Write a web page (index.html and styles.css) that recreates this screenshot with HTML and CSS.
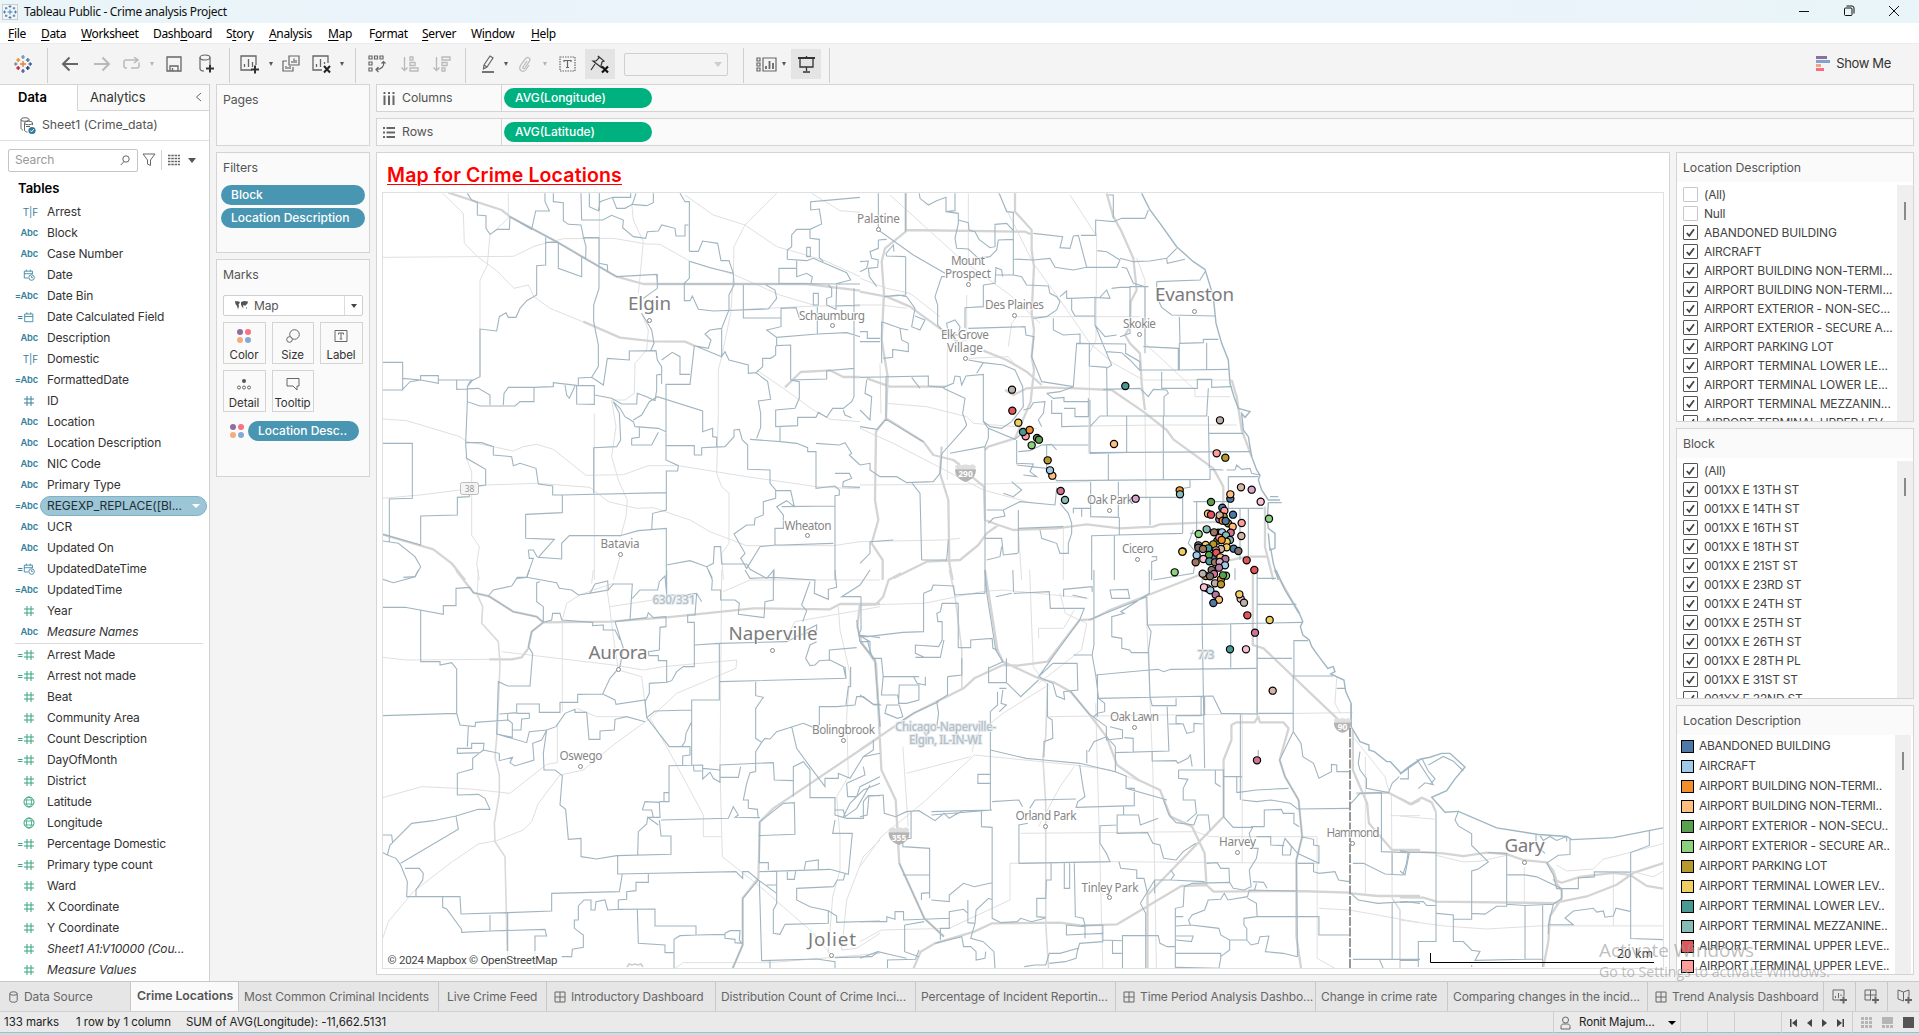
FILE: index.html
```html
<!DOCTYPE html>
<html lang="en">
<head>
<meta charset="utf-8">
<title>Tableau Public - Crime analysis Project</title>
<link rel="stylesheet" href="styles.css">
</head>
<body>
<svg class="defs" width="0" height="0" aria-hidden="true">
  <symbol id="hash" viewBox="0 0 12 12"><path d="M4 1v10M8 1v10M1 4h10M1 8h10"/></symbol>
  <symbol id="cal" viewBox="0 0 14 14"><path d="M2 3.5h9.5v9H2zM2 6.5h9.5M4.5 1.5v2M9 1.5v2"/></symbol>
  <symbol id="caltime" viewBox="0 0 14 14"><path d="M6 10.5H1.5v-8H11V6M1.5 5.5H11M4 .7v2M8.500 .7v2"/><circle cx="10" cy="10" r="3.2"/><path d="M10 8.300V10h1.500"/></symbol>
  <symbol id="globe" viewBox="0 0 12 12"><circle cx="6" cy="6" r="5"/><ellipse cx="6" cy="6" rx="2.500" ry="5" stroke-width=".8"/><path d="M1.500 4h9M1.500 8h9" stroke-width=".8"/></symbol>
  <symbol id="check" viewBox="0 0 15 15"><path d="M3.800 8l2.500 2.800L11 4.300"/></symbol>
  <symbol id="grid" viewBox="0 0 12 12"><path d="M1 1h10v10H1zM1 6h10M6 1v10"/></symbol>
  <symbol id="shield" viewBox="0 0 22 18"><path d="M1 3l3-2 3 1 4-1 4 1 3-1 3 2-1 3H2z" fill="#dedede" stroke="none"/><path d="M1 6h20c0 6-3 10-10 12C4 16 1 12 1 6z" fill="#b4b4b4" stroke="none"/></symbol>
  <symbol id="dots4" viewBox="0 0 14 14"><circle cx="3" cy="3" r="3" fill="#8c6f9c"/><circle cx="11" cy="3" r="3" fill="#fa7183"/><circle cx="3" cy="11" r="3" fill="#f6ab7c"/><circle cx="11" cy="11" r="3" fill="#87a9d1"/></symbol>
</svg>

<header class="titlebar">
  <span class="appicon"><svg width="14" height="14" viewBox="0 0 14 14"><path d="M7 4.500v5M4.500 7h5M7 0v3M5.500 1.500h3M7 11v3M5.500 12.500h3M0 7h3M1.500 5.500v3M11 7h3M12.500 5.500v3M3 2v2.500M2 3.200h2.500M11 2v2.500M9.700 3.200h2.500M3 9.500V12M2 10.800h2.500M11 9.500V12M9.700 10.800h2.500" stroke="#3f83b8"/></svg></span>
  <span class="apptitle">Tableau Public - Crime analysis Project</span>
  <span class="winbtns">
    <svg viewBox="0 0 12 12"><path d="M1 6.500h10"/></svg>
    <svg viewBox="0 0 12 12"><rect x="1.500" y="3" width="7.500" height="7.500" rx="1"/><path d="M3.500 1h5.500a2 2 0 0 1 2 2v5.500"/></svg>
    <svg viewBox="0 0 12 12"><path d="M1 1l10 10M11 1L1 11"/></svg>
  </span>
</header>
<nav class="menubar">
  <span class="m1"><u>F</u>ile</span><span class="m2"><u>D</u>ata</span><span class="m3"><u>W</u>orksheet</span><span class="m4">Dash<u>b</u>oard</span><span class="m5">S<u>t</u>ory</span><span class="m6"><u>A</u>nalysis</span><span class="m7"><u>M</u>ap</span><span class="m8">F<u>o</u>rmat</span><span class="m9"><u>S</u>erver</span><span class="m10">Wi<u>n</u>dow</span><span class="m11"><u>H</u>elp</span>
</nav>

<div class="toolbar">
  <div class="tg g1"><span class="w46"><svg width="18" height="18" viewBox="0 0 18 18" stroke-width="1.400"><path d="M9 6v6M6 9h6" stroke="#eb7a3a"/><path d="M9 0v4M7.300 2h3.400" stroke="#6a93b8"/><path d="M9 14v4M7.300 16h3.400" stroke="#4c5f9b"/><path d="M0 9h3.500M1.700 7.300v3.400" stroke="#7199a6"/><path d="M14.500 9H18M16.300 7.300v3.400" stroke="#4d5e98"/><path d="M4.200 3v4M2.300 5h3.800" stroke="#eb9130"/><path d="M13.800 3v4M11.900 5h3.800" stroke="#4f7b93"/><path d="M4.200 11v4M2.300 13h3.800" stroke="#c7203f"/><path d="M13.800 11v4M11.900 13h3.800" stroke="#1f457e"/></svg></span></div>
  <div class="tg g2">
    <span class="w32"><svg width="18" height="16" viewBox="0 0 18 16" stroke-width="2"><path d="M17 8H2M8.500 1.500L2 8l6.500 6.500"/></svg></span>
    <span class="w32 off"><svg width="18" height="16" viewBox="0 0 18 16" stroke-width="2"><path d="M1 8h15M9.500 1.500L16 8l-6.500 6.500"/></svg></span>
    <span class="w28 off"><svg width="19" height="14" viewBox="0 0 19 14" stroke-width="1.500"><path d="M4 11H3a2 2 0 0 1-2-2V5a2 2 0 0 1 2-2h11M11 0l4 3-4 3M16 5.500V9a2 2 0 0 1-2 2H8"/></svg></span>
    <span class="w12 car off"></span>
    <span class="w32"><svg width="16" height="16" viewBox="0 0 16 16" stroke-width="1.300"><path d="M1 1h14v14H1zM4 15v-5h8v5M6.500 12v3"/></svg></span>
    <span class="w32"><svg width="18" height="20" viewBox="0 0 18 20" stroke-width="1.200"><ellipse cx="8" cy="3.500" rx="5" ry="2.500"/><path d="M3 3.500v11c0 1.500 2 2.500 4 2.500M13 3.500V10"/><path d="M9 14.500h8M13 10.500v8" stroke="#333" stroke-width="2"/></svg></span>
  </div>
  <div class="tg g3">
    <span class="w32"><svg width="20" height="19" viewBox="0 0 20 19" stroke-width="1.300"><path d="M12 15H1V1h15v9M4.500 12V9M8.500 12V4M12.500 12V7"/><path d="M11 14.500h8M15 10.500v8" stroke="#333" stroke-width="2"/></svg></span>
    <span class="w9 car"></span>
    <span class="w32"><svg width="18" height="18" viewBox="0 0 18 18" stroke-width="1.200"><path d="M7 1h10v9H7zM10 8V6M12 8V3.500M14 8V5M5 6H1v10h10v-4M4 14v-3M6 14v-2M8 14v-3"/></svg></span>
    <span class="w30"><svg width="20" height="19" viewBox="0 0 20 19" stroke-width="1.300"><path d="M10 15H1V1h15v7M4.500 12V9M8.500 12V4M12.500 9V7"/><path d="M12 11l6 6.500M18 11l-6 6.500" stroke="#222" stroke-width="2"/></svg></span>
    <span class="w10 car"></span>
  </div>
  <div class="tg g4">
    <span class="w32"><svg width="18" height="18" viewBox="0 0 18 18" stroke-width="1.200"><path d="M1 1h3v3H1zM6.500 1h3v3h-3zM12 1h3v3h-3zM1 7h3v3H1zM1 13h3v3H1z"/><path d="M15.500 7c1 4-2 7.500-7 7.500M13.500 8.500l2-2 2 2M10.500 12l-2.500 2.500 2.500 2.500"/></svg></span>
    <span class="w33 off"><svg width="18" height="16" viewBox="0 0 18 16" stroke-width="1.300"><path d="M3.500 1v13M.5 11.500l3 3 3-3M9 1h3v3H9zM9 6.500h5v3H9zM9 12h8v3H9z"/></svg></span>
    <span class="w32 off"><svg width="18" height="16" viewBox="0 0 18 16" stroke-width="1.300"><path d="M3.500 1v13M.5 11.500l3 3 3-3M9 1h8v3H9zM9 6.500h5v3H9zM9 12h3v3H9z"/></svg></span>
  </div>
  <div class="tg g5">
    <span class="w28"><svg width="14" height="18" viewBox="0 0 14 18" stroke-width="1.200"><path d="M3 10l6-9 3 2-6 9-3.500 2zM3 10l3 2"/><path d="M1 17h12" stroke-width="1.800"/></svg></span>
    <span class="w7 car"></span>
    <span class="w32 off"><svg width="14" height="17" viewBox="0 0 14 17" stroke-width="1.200"><path d="M9 5l-4 6c-.7 1.300 1 2.300 1.900 1l4.600-7c1.500-3-2-5-4-2.300L2.500 9.500C0 14 5 17.500 8 13.500l3-4.500"/></svg></span>
    <span class="w8 car off"></span>
    <span class="w36"><svg width="17" height="16" viewBox="0 0 17 16" stroke-width="1.200"><path d="M1 1h15v14H1z" stroke-dasharray="1.500 1"/><path d="M5 6V4.500h7V6M8.500 4.500v7M7 11.500h3"/></svg></span>
    <span class="w30 on"><svg width="20" height="19" viewBox="0 0 20 19" stroke-width="1.200"><path d="M8 1l6 5-2 1-1 4 1 2-9-7h3l3-3zM5 9l-4 6" stroke="#333"/><path d="M12 11.500l6 6M18 11.500l-6 6" stroke="#111" stroke-width="2.200"/></svg></span>
    <span class="combo"><i></i></span>
  </div>
  <div class="tg g6">
    <span class="w28"><svg width="21" height="15" viewBox="0 0 21 15" stroke-width="1.200"><path d="M1 1h3v3H1zM1 6h3v3H1zM1 11h3v3H1zM7 1h13v13H7z"/><path d="M10 12V9M13.500 12V4M17 12V6" stroke-width="1.800"/></svg></span>
    <span class="w7 car"></span>
    <span class="w30 on gap"><svg width="17" height="17" viewBox="0 0 17 17" stroke-width="1.300"><path d="M0 2h17" stroke-width="2"/><path d="M2 2v9h13V2M8.500 11v4M5 16h7M8.500 0v2"/></svg></span>
  </div>
  <div class="showme"><svg width="14" height="15" viewBox="0 0 14 15"><path d="M0 0h11v3H0z" fill="#8c6f9c"/><path d="M0 4h14v3H0z" fill="#7fa3cd"/><path d="M0 8h5v3H0z" fill="#f0a57c"/><path d="M0 12h8v3H0z" fill="#fa6b7e"/></svg>Show Me</div>
</div>

<main class="work">
  <aside class="data">
    <div class="tabs"><b>Data</b><span class="an">Analytics<svg width="7" height="10" viewBox="0 0 7 10"><path d="M6 1L1.500 5 6 9"/></svg></span></div>
    <div class="source"><svg width="16" height="18" viewBox="0 0 16 18"><ellipse cx="5" cy="2.500" rx="4" ry="1.800"/><path d="M1 2.500v8.500c0 1 1 2 2 2M9 2.500V4"/><ellipse cx="8.500" cy="6" rx="4" ry="1.800"/><path d="M4.500 6v7c0 1.500 2 2 3 2M12.500 6v2M6 9.500h4"/><circle cx="12" cy="13.500" r="3.600" fill="#2f7a98" stroke="none"/><path d="M10.300 13.500l1.300 1.400 2.200-2.700" stroke="#fff"/></svg>Sheet1 (Crime_data)</div>
    <div class="search"><span class="box">Search<svg width="10" height="11" viewBox="0 0 10 11"><circle cx="6" cy="4" r="3.200"/><path d="M4 6.500L.8 10"/></svg></span>
      <svg class="fun" width="14" height="14" viewBox="0 0 14 14"><path d="M1 1h12L8.500 7v5.500l-3-1.500V7z"/></svg>
      <svg class="lst" width="12" height="11" viewBox="0 0 12 11"><path d="M0 1h12M0 4h12M0 7h12M0 10h12" stroke-dasharray="2.500 .8" stroke-width="1.400"/></svg><i class="tri"></i></div>
    <h3>Tables</h3>
    <ul class="fields dim">
      <li><i>T|F</i>Arrest</li>
      <li><i><b>Abc</b></i>Block</li>
      <li><i><b>Abc</b></i>Case Number</li>
      <li><i><svg><use href="#caltime"/></svg></i>Date</li>
      <li><i><b>=Abc</b></i>Date Bin</li>
      <li><i><b>=</b><svg><use href="#cal"/></svg></i>Date Calculated Field</li>
      <li><i><b>Abc</b></i>Description</li>
      <li><i>T|F</i>Domestic</li>
      <li><i><b>=Abc</b></i>FormattedDate</li>
      <li><i><svg><use href="#hash"/></svg></i>ID</li>
      <li><i><b>Abc</b></i>Location</li>
      <li><i><b>Abc</b></i>Location Description</li>
      <li><i><b>Abc</b></i>NIC Code</li>
      <li><i><b>Abc</b></i>Primary Type</li>
      <li class="sel"><i><b>=Abc</b></i><span>REGEXP_REPLACE([Bl...</span></li>
      <li><i><b>Abc</b></i>UCR</li>
      <li><i><b>Abc</b></i>Updated On</li>
      <li><i><b>=</b><svg><use href="#caltime"/></svg></i>UpdatedDateTime</li>
      <li><i><b>=Abc</b></i>UpdatedTime</li>
      <li class="g"><i><svg><use href="#hash"/></svg></i>Year</li>
      <li class="it"><i><b>Abc</b></i>Measure Names</li>
    </ul>
    <ul class="fields mea">
      <li><i><b>=</b><svg><use href="#hash"/></svg></i>Arrest Made</li>
      <li><i><b>=</b><svg><use href="#hash"/></svg></i>Arrest not made</li>
      <li><i><svg><use href="#hash"/></svg></i>Beat</li>
      <li><i><svg><use href="#hash"/></svg></i>Community Area</li>
      <li><i><b>=</b><svg><use href="#hash"/></svg></i>Count Description</li>
      <li><i><b>=</b><svg><use href="#hash"/></svg></i>DayOfMonth</li>
      <li><i><svg><use href="#hash"/></svg></i>District</li>
      <li><i><svg><use href="#globe"/></svg></i>Latitude</li>
      <li><i><svg><use href="#globe"/></svg></i>Longitude</li>
      <li><i><b>=</b><svg><use href="#hash"/></svg></i>Percentage Domestic</li>
      <li><i><b>=</b><svg><use href="#hash"/></svg></i>Primary type count</li>
      <li><i><svg><use href="#hash"/></svg></i>Ward</li>
      <li><i><svg><use href="#hash"/></svg></i>X Coordinate</li>
      <li><i><svg><use href="#hash"/></svg></i>Y Coordinate</li>
      <li class="it"><i><svg><use href="#hash"/></svg></i>Sheet1 A1:V10000 (Cou...</li>
      <li class="it"><i><svg><use href="#hash"/></svg></i>Measure Values</li>
    </ul>
  </aside>

  <section class="cards">
    <div class="card pages"><h4>Pages</h4></div>
    <div class="card filters"><h4>Filters</h4><span class="pill">Block</span><span class="pill">Location Description</span></div>
    <div class="card marks"><h4>Marks</h4>
      <div class="msel"><svg width="13" height="9" viewBox="0 0 13 9"><path d="M0 0l4 .5 1 1-1.500 2L4 5 3 8.500 2 5 .5 3zM6 1l3-1 4 .5-.5 2L11 4l-1 1-1-1-1 .5L8.500 7 7 6 6 3.500zM11 6l1 1-1 1z"/></svg><span>Map</span><em></em></div>
      <div class="mgrid">
        <div><svg width="14" height="14"><use href="#dots4"/></svg>Color</div>
        <div><svg width="14" height="14" viewBox="0 0 14 14"><circle cx="8.500" cy="5.500" r="4.800"/><circle cx="3.500" cy="10.500" r="2.800" fill="#fafafa"/></svg>Size</div>
        <div><svg width="14" height="14" viewBox="0 0 14 14"><path d="M1 1.500h12v11H1z"/><path d="M4.500 5.500V4h5v1.500M7 4v6M5.800 10h2.400"/></svg>Label</div>
        <div><svg width="14" height="14" viewBox="0 0 14 14"><circle cx="7" cy="4" r="2" fill="#555" stroke="none"/><circle cx="2" cy="10.500" r="1.500"/><circle cx="7" cy="10.500" r="1.500"/><circle cx="12" cy="10.500" r="1.500"/></svg>Detail</div>
        <div><svg width="14" height="14" viewBox="0 0 14 14"><path d="M1 1.500h12v7.500h-2v4L7 9H1z"/></svg>Tooltip</div>
      </div>
      <div class="mpill"><svg width="14" height="14"><use href="#dots4"/></svg><span class="pill">Location Desc..</span></div>
    </div>
  </section>

  <section class="right">
    <div class="shelf"><span class="sl"><svg width="12" height="13" viewBox="0 0 12 13"><path d="M1.500 0v2M6 0v2M10.500 0v2M1.500 3.500V13M6 3.500V13M10.500 3.500V13"/></svg>Columns</span><span class="gpill">AVG(Longitude)</span></div>
    <div class="shelf"><span class="sl"><svg width="12" height="13" viewBox="0 0 12 13"><path d="M0 2h2M0 6.500h2M0 11h2M3.500 2H13M3.500 6.500H13M3.500 11H13"/></svg>Rows</span><span class="gpill">AVG(Latitude)</span></div>
    <div class="vizrow">
      <div class="viz">
        <h1>Map for Crime Locations</h1>
        <div class="mapbox">
<svg class="map" viewBox="383 193 1280 775" width="1280" height="775">
<!-- minor roads -->
<g class="minor">
<path transform="translate(380 180) scale(.33333)" d="M188 40L250 100 253 190 295 232 350 272 402 325 445 315 462 350 510 385 620 430M8 232L400 229 465 198 550 176 700 175 800 192 840 193 930 244 1060 283 1200 345 1310 378M385 40V115L330 165 322 255 300 300V590M658 40V250M8 717L80 722 240 770 260 785 340 800 400 813 430 800 470 793 520 808 618 886 730 884 805 857 895 857 1100 890 1310 920 1440 927M257 830L275 875V1065L298 1100 290 1150 298 1200M8 955L120 945 240 930 320 915 475 910 630 922 685 965 770 985 820 983 930 1020 990 1055 1100 1097H1360L1440 1085M643 700V1200M755 70L760 120 790 185 780 290 775 340M785 400L805 450 800 510 765 550 763 640 735 660 695 660 708 740 695 830 715 900 742 960 738 1010 722 1070M720 1130L700 1200M915 45L1000 105 1095 135 1190 200 1330 240 1440 290M1190 40L1095 135 1062 200 1060 290 1052 400 1025 530 1015 570V700L1010 880 1025 920 1047 940V1090L1025 1120 1030 1200M1295 40L1380 92 1440 97M1090 388L1310 378H1440M1130 570L1210 625 1300 690 1350 718 1440 725"/>
<path transform="translate(860 180) scale(.33333)" d="M90 45L300 235 450 345 540 430M630 45L705 160M415 40L520 250 600 360 690 490 760 550 850 600H1115M325 40V240M855 490L930 560 1005 630V650H1110M710 160L708 480 688 520V640L685 820M0 915L375 912 690 905M60 550L63 700M690 738L900 735H1130M320 345V480L262 500V900M470 410H840M0 745L100 790 370 930 500 965M855 695L858 960M78 670L200 680 320 710 340 730 530 745M0 1085L250 1080 300 1075M475 1050L485 1200M610 1040V1200M830 235L855 300V490M0 375H65L140 385M0 295L80 325 150 340 240 410M445 500L455 430 470 410M325 535L445 530 470 560"/>
<path transform="translate(380 570) scale(.33333)" d="M8 262L80 270 330 268M365 245L700 285 790 300 850 290 1070 270 1068 295 890 370 810 445 700 525 640 575 610 600 540 615 475 700 455 755 430 780 350 812 295 822 210 880 100 965 25 1055 8 1105M8 683L125 650 270 657 390 670 500 583 532 578V460M560 100L600 75 640 60 700 40M547 425V150L560 100M295 0L292 70M640 0L635 40M680 50L690 120 700 200 715 300 785 320 790 360 800 440M1025 0L1020 600 1027 860 1140 950 1290 1080 1350 1150M1215 210L1245 155 1500 110M1375 110L1380 180 1410 310 1400 440 1405 620 1370 680 1380 800V900L1358 980 1345 1150M810 445L860 530 970 735V800H1025M1500 810L1450 860 1400 990 1385 1140M690 110L820 90M885 1195L910 1178H1170L1500 1150M1030 65L1110 30H1500M590 415L650 440 740 440M1385 1140L1430 1135 1500 1090"/>
<path transform="translate(860 570) scale(.35714 .33333)" d="M0 105L180 100 340 65 400 60 640 85M475 0L485 290 520 340M560 70L575 130 635 160 620 240 500 340M520 350L400 430 320 500 315 545M800 80L820 600 830 1195M530 440L860 435 1380 428M450 790L940 785 980 800H1280V1165L1330 1195M120 530L135 770M320 555L600 585 700 600 800 640M130 610L310 560M600 590L560 650 500 770M660 400L680 1195M0 1115L60 1080 250 1075 420 990V880L700 875 1280 880M1070 430V880M1285 1015L1370 1020 1568 1058M1380 500L1470 620 1480 660M1488 670L1490 985M1415 560V970M0 890L60 800 180 695 320 555M1335 320L1330 400 1345 430M1485 737H1568M500 205V175H570L600 120"/>
<path transform="translate(1400 420) scale(.33333 .39216)" d="M0 1010L105 1018M0 1275L130 1290 260 1298 420 1290H790M373 1140V1230M640 1155V1290M580 1145L610 1120 690 1103 790 1080M470 1135L500 1150 580 1145M690 1150L760 1165 790 1150M108 1110L190 1127 240 1125 320 1110"/>
</g>
<!-- highways -->
<g class="major">
<path transform="translate(380 180) scale(.33333)" d="M205 38L365 90 390 110 530 185 710 290 790 312H1280L1440 332M610 425L720 473 820 484 915 485 945 498M1215 622L1262 576 1350 571 1390 591H1440M8 1063L160 1108 215 1150 255 1200"/>
<path transform="translate(860 180) scale(.33333)" d="M137 40V155L75 205 65 245 72 340 65 480 83 590 78 715 48 755 45 960 55 1020 35 1090 68 1140V1200M140 150L495 155 517 165M465 40V95L515 150V210L522 260 515 400 522 450 515 530 522 570 512 665 480 740 465 775 385 800 375 810M740 40L760 110 785 155 820 235 830 330 812 365 810 440 795 465 810 490 840 520 845 610 855 690M0 335L80 350 150 380 240 445 300 490M370 512L440 540 500 575 545 615M20 595L90 620H255M435 630L460 645 500 625 545 622 650 625 755 630 850 695 920 750 940 778 1060 865 1090 920V1000M78 715L190 785 220 825 280 840 300 855M335 890L372 920 375 1020 415 1035 460 1050 590 1045 680 1033 780 1045 880 1040 900 1033 1090 1025M415 1035L380 1060 355 1095 300 1140 200 1145 100 1195M1115 600L1130 650 1145 750 1175 830M245 800L240 880 265 960 268 1150 278 1200M1215 980V1100L1240 1200M1090 1145L1160 1130H1220"/>
<path transform="translate(380 570) scale(.33333)" d="M228 0L280 68 330 80 400 125 470 140 490 157 690 155 860 142 1120 115 1350 118 1380 102H1500M490 157L455 185 445 235 425 262 395 268H328M1500 500L1180 715 1140 755 1135 925 1088 985V1125L1058 1195M1440 100L1432 170 1445 220 1485 270 1500 470"/>
<path transform="translate(860 570) scale(.35714 .33333)" d="M0 105L45 103 65 80 80 30 115 10M0 210L45 280 60 600 100 690 110 880 180 1045 235 1100M0 540L150 430 290 355 320 325 400 285M400 285L440 287 525 275 615 150 650 148 700 120 950 15M350 0L385 240 400 275 500 325 545 338 590 365 640 430 690 500 720 585 780 630 840 660 870 740 930 770 965 850 970 945 990 965 1225 963 1370 968M1375 970L1450 978H1568M150 1195L170 1145 210 1120 320 1085 370 1060 560 1058 620 1067 720 1063 900 948 970 945M1100 0V225L1130 235 1345 455M805 1195V975L1018 740V570L1040 510V465L1055 457H1105L1115 440 1120 457H1185L1200 475 1175 570 1190 620 1228 690 1238 800 1222 870V1100L1235 1195M1160 0L1230 130M1380 480V600L1420 700 1425 760 1490 840H1568M1390 670L1480 668 1520 690 1545 703 1568 690"/>
<path transform="translate(1400 420) scale(.33333 .39216)" d="M0 965L30 980 65 963 95 975 108 1000M0 1098L130 1105 190 1112 260 1103 320 1107 370 1122 440 1128 460 1150 470 1175 485 1180 540 1165 640 1155 690 1160 740 1188 790 1195M0 1217L70 1218 110 1228 460 1232 560 1215 650 1185 700 1155 790 1130M460 1170L485 1200V1220L450 1265 445 1330 430 1395"/>
</g>
<g class="mid">
<path transform="translate(380 570) scale(.33333)" d="M290 70L308 110 305 160 355 215 360 280 352 480 345 560 358 615V670L343 760 345 815 375 860 383 1195"/>
<path transform="translate(860 570) scale(.35714 .33333)" d="M525 340L520 500 512 560 520 700V1060L528 1195M250 0L265 70 285 240V355M1112 230V440M1490 985L1512 1020V1195"/>
</g>
<!-- place boundaries and lake shore -->
<g class="bound">
<path transform="translate(380 180) scale(.33333)" d="M262 40L275 60 292 68V105L318 107V145L330 163 352 148H388L390 110 455 148 467 93H508L495 65V40M520 40V65L550 68V122L565 133 603 135 610 170 618 200 617 235 605 230V290L535 265V187H497M390 110L530 185 605 230 710 290 830 283 832 312H1440M603 40L605 120H668L695 106 730 120 728 143 760 170 797 175 802 155 835 153 845 135 885 145 888 168H915V135H925M628 40V80L655 92 660 65 697 52 710 85H735L757 73 800 77 820 68V40M757 73L768 40M697 52H752V40M658 40V92M608 173H657V325L641 375V425L655 495V560L635 592 595 594V617M657 250L682 255 683 275 710 290M497 172V255L470 257V345L440 362 420 385 408 412H385L378 398 358 410 350 453 300 447V590L270 605 262 620V665L300 678H405L420 665H462V622L520 620V608L590 616 643 617V673L590 672V617M555 615L560 645 568 655 575 640 585 618M8 547H68V630H8M68 628L90 605 122 600V587H175V600L278 600 262 620M68 595L122 600 175 610V600M230 600V628L295 625 330 645V675M370 675L372 640 385 622H462M262 665L257 790 260 835 317 868V915L275 920M257 787L305 788 340 800V825L395 830 400 857 420 850 468 865 475 912 518 918V945H547V998L437 1003V1075L523 1078 475 1132 545 1137V1090L568 1067H720L775 1052 859 1045V1200M547 945L859 938M8 790H97V955L28 957V1085M122 1095V1008L232 1005V952L268 950V920M8 1063L122 1095M8 1083L55 1090 105 1130 122 1160 105 1190 70 1192M643 645L695 655 725 672 770 672 772 640 800 650 825 662 830 630V585L843 583M700 665L718 700 722 780 710 800 641 803V940M643 617V645M700 665L720 685 735 710 760 725 765 740 835 745 858 755V613H930L943 497M760 720L785 705 808 665 832 650 968 693V755L998 745V770L1010 772V803M635 592L670 615 682 535 748 540V513L828 512 832 540 845 560V612M845 540L877 517 900 530V583H930M755 775L778 772V742M755 775V795H815L835 757M858 797H943V825H965V803L1035 800 1062 770V750L1078 748 1087 780 1103 795V868L1170 870V910L1187 930V955L1150 965V1005L1125 1015 1123 1035H1100L1062 1062 1095 1120 1082 1135 1100 1165 1140 1100 1185 1095M858 755V840L895 857 893 873H859V990L818 1000 815 1050M928 214H955L968 183 1013 190 1023 242H1047L1060 280 1062 315 1047 345V390L1025 445V530L1035 515 1047 540 1105 555V580L1128 578 1163 605 1172 658 1135 663 1142 700V742L1130 775M900 40L915 65H928V214M928 244V295L913 310V362H930L937 348 955 388 1000 393 1165 387 1190 355 1185 330 1158 315M928 244L990 263 1060 280M790 355L832 325V283M785 400L815 450 822 490 812 512M1025 445L990 450 975 462 993 480 985 505 945 497 1025 530M1090 315V414H1203V385L1248 383 1260 420M1203 414V440L1160 450 1190 472 1312 462 1400 458 1440 470M1190 472V497L1232 495V600L1258 605V655L1245 685 1187 690V740L1253 737V712H1308L1315 697 1340 712 1358 685H1390L1415 665 1422 650V325M1110 778L1200 785V740M1200 785L1250 790 1283 803V815H1308V925L1365 918 1378 930V945L1365 947V1200M1308 790L1378 795 1395 788 1415 820 1408 825 1440 855M1232 600L1340 597V572L1422 565M1128 578L1148 560V535H1172L1187 525V497M1365 880H1408L1415 895 1390 905 1388 920 1440 922M1440 52L1332 62 1292 65V90L1318 87 1325 132 1290 148H1250L1235 165V200L1222 210V238L1280 242 1300 235 1400 278 1412 300 1365 312 1197 310V265H1250V242M1290 148V175L1318 178V232L1330 245M1280 202H1291V230H1280ZM1250 265V290L1280 280 1297 290 1293 310M1300 340V375H1315V340ZM1345 315L1355 325V350L1340 355V375L1368 388 1370 315M1187 932H1232L1243 980 1220 962 1190 980 1210 1005V1045H1185V1095H1205L1360 1090M1205 980L1365 978M859 1155L930 1142 980 1160 1000 1150 1003 1100H1022L1025 1152H1100L1110 1168 1160 1195 1182 1170V1200M980 1160L997 1195M445 1110H460L472 1132M445 1110L448 1135H460L440 1192H410M1312 380V462M1368 378L1440 375M1390 690L1395 705 1415 713M1010 803V772"/>
<path transform="translate(860 180) scale(.33333)" d="M55 40V150L160 225 255 280M178 40L180 55 205 75 230 62 258 52V95L285 92V40M258 95L295 100V130L285 175 290 205 325 207 355 235 390 230 410 210 415 180 460 178M295 120L325 128 327 150 345 155 357 178 390 203 405 200V133L440 130 460 152M418 40L440 95 460 97V285L407 285M460 237L520 240 570 235 585 262 640 270 680 262 770 262 780 240 740 215 712 212M520 160L608 170 600 203 630 205 640 168 655 166 680 262M663 166H707V120L760 125 785 115 855 115 865 90M745 45L760 45V115M780 235L820 245 870 243 920 235 950 205M920 235L922 250 975 238M890 305L1020 300 1035 275M890 305V350L905 382 935 405 1065 408M785 262L800 265 820 310 855 320V520M865 320H810V460L780 470M770 465L735 470 705 435V350M630 355L720 352 740 330 750 355 705 352M755 325L780 322H810M460 285L485 290 500 315 565 318 570 340 590 350 600 365 590 390 560 410 520 415M580 415V450L610 465 660 462V490M600 350L620 333V355H635V390L645 408H705M325 445L495 440 498 465 522 470 515 530 545 605 640 620 650 490 797 492V520L840 545V570H955V505L850 500M738 515L785 518 810 540 840 572M738 515L755 555 740 565 742 708M688 490V558L740 562M705 435L738 515M958 410L960 490 1030 488V478H1075M1040 488V568M958 490V570L1105 568M905 575V625H1012V598H1055V622L1115 620M730 628L840 625 865 650 880 628 920 630 925 640 912 650V708M690 740L720 708 1040 708 1045 625M800 708V818L690 820V660M745 820V900M910 708V898M1045 708L1048 865M690 818L1170 815M1048 760H1150M600 902L1050 898V868L1090 870M640 820M665 1010V985H692M692 905V1010L775 1012V905M870 955V1035M968 925V1060M770 1065L968 1060M778 1012V1065L695 1067V1200M763 1067V1200M775 952H965L970 925 990 922V900M1000 965H1105M1010 965V1140M1100 870H1125L1130 855 1145 868 1170 865 1175 880 1200 885M1105 890V985H1210M1165 985V1140M1140 1140V985M1105 890H1195M137 230V345L72 350M137 230L80 228 78 220 100 195 102 215M55 180L80 178M55 180V205L30 215 35 235 55 240 53 262 25 265 28 290 50 320M0 245L25 243 20 265 0 275M72 350L115 345 140 350 165 385 155 440 180 450 195 420 165 408M65 425L120 445 145 450M120 445L125 480 145 490V515L98 508V532L70 535M137 40V155M255 290H245L225 350 233 375V435L260 465M370 315V380L315 383V445M260 430L285 420 300 440 295 465H265ZM405 262L425 270 428 290M370 315L405 310 408 262M0 592L205 588V618L250 622 280 610 285 588 300 590 305 615 318 588 370 583V725M372 725L390 740 425 745 455 725 490 680 488 620 465 570 430 555 370 548 325 540M370 548L350 580M155 592L180 625M250 625L315 655 308 700 320 735 313 745 245 822M270 820L375 800M370 725L385 745 385 775 375 800V1200M385 745L465 778 480 765M490 690L510 685 520 668 555 665 550 700 535 720 545 740M560 640L580 655 612 652V665H685M575 660V700H605V740L685 738M640 620L600 635 560 640M612 685H645V710H685V655M470 780V850L520 852 510 875 530 890 490 885M475 815L510 812 545 795 575 793 590 810M560 795V865L590 902H600M560 795H685M560 865L470 855M0 855L30 850V870L60 890 110 890 140 908 220 905 240 880 245 822M155 908L180 940 185 1140M375 1075L425 1075 430 1125 473 1120M475 990V1120M380 990L430 990 480 965 585 975 590 925 610 940M430 990L435 1008 400 1015 385 1030M455 905L485 930 460 950 430 940M540 1050L545 1075 590 1090 600 1120H625V1090L635 1060V1030L625 1000 600 970M475 1045L610 1040M425 1100L420 1130 380 1140M640 1000V985H665M875 1130H890V1140L875 1145V1200M0 1150L30 1120 30 1085 100 1080M185 1140L260 1140 265 1080M0 690L30 720 35 650 15 640 20 600M0 740L50 748 78 718 190 785M0 485H60M0 455H22V475H60M1000 1050L985 1090 1010 1120 1000 1180 880 1200M1010 1060H990M65 550V425M83 590H78V715M1125 1165V1200"/>
<path transform="translate(380 570) scale(.33333)" d="M8 28L40 38 105 20 115 0M8 112H75L190 133V107H228V55L270 52 280 68 325 78 340 60 395 48 410 25 440 22 530 38 538 55 575 60 595 75 630 70 645 42 683 33 685 60 627 70M685 60L700 42H757L750 150M757 85L780 60H833L838 35 855 18 860 75M440 22L448 0M480 35L470 38V95L490 110V157L515 150 518 130H540L545 150 638 157V167L670 165V180H705L720 210M705 155L730 235 720 290 690 325 668 372 705 390 708 403 795 390 800 440M122 122V275H180V285L215 278 230 297V430L240 465 285 470 287 457 385 450 397 460V502L350 492 355 335 383 348H450L458 250 445 230 455 185 490 157M8 437L230 430M325 78L400 125 470 140 490 157M705 155L800 143 805 128 820 143 858 140V170L840 172 838 240 805 245 807 257H835V272H860V337L808 340V370L797 392M860 337L875 332 890 305 910 290H943V157H923V135H945L950 70M965 95L950 70 915 75H860V0M943 225L1018 220 1220 215 1260 195 1310 180V165L1270 185M1018 220V390H935V420L825 423 800 443 868 530H930V555L908 558V585M935 420V585M935 455L918 490 915 515 905 530M1018 335L1398 325 1390 290 1350 270 1318 272 1305 285 1290 287 1277 265 1290 225 1310 215M668 372L593 373V397H540V427H478V402H410V428L358 432M383 430V450M410 430H448V445L425 447 423 480H397M350 492L440 518 448 485 500 480 528 470 555 430 585 418V427H620L627 508H660V483L703 480 705 448 740 440 795 455M500 480L490 550 492 600 525 600 547 617 540 705 557 718 565 808 603 805V860L650 867 710 857 873 853V798H843L838 750M500 480L485 510 458 520 462 570 405 588 390 578 398 562 358 572V550L310 540 312 520H275V535L232 535V550L300 548 310 540M300 548L278 565V597L232 610V675L295 673 315 685 330 718 295 718 228 738 160 752 95 760 30 825 22 855 48 865 62 885 82 935 80 980 240 980 243 1032 383 1028 515 1023V970L718 965 727 912H713V857M262 530L265 470M228 738L235 778 62 880M8 795H35L38 820M8 847L22 855M75 895H118L130 910 128 930 108 960V980M188 982V1012L200 1017 245 1078V1087L330 1083 495 1078 500 1098H465V1195M330 1035V1083M383 1028V1195M545 1160H575L577 1138 610 1132V1095L583 1075V1050H595V1008L612 990H633V1020H645L648 995 675 990 683 1020 715 1018V990L740 988V965L768 962V937H805V912M715 1018L825 1017V1068H948V1095L900 1097 882 1108V1195M772 1018L775 1120 855 1125V1148H880M950 1095L1035 1093M713 912L1068 905 1088 925V905H1105L1135 930 1190 970M773 855L775 785 800 762 803 742 835 765M787 720L795 695 838 697 840 742 803 742M787 720H815L820 742M838 695H867V587L968 585V627L990 607 1000 625 1020 637V585L1180 578 1183 630 1240 632V590L1270 575 1290 600V683H1365V735L1400 745 1450 745V695L1465 677H1500M852 693V668H867M843 750L1045 745 1060 710 1075 735 1065 742 1140 743M940 585L942 603H965M1022 622H1075L1082 590M968 595L1020 600M1127 605L1110 608 1100 640 1090 690H1105V715L1132 718 1135 745M1127 335V377L1150 382 1127 415V505L1145 517 1127 545V605M1145 517L1155 505 1170 507 1190 485 1270 460 1300 472 1318 465V410H1370L1425 405 1430 380H1450L1480 403H1500M1235 470L1250 535 1290 590 1335 650V625H1375V610L1410 625 1450 560 1480 540V510M1398 325L1395 290M1412 350H1405L1398 405M1412 290V350M1240 680V598M1210 700L1243 698 1245 793 1135 797M1138 755V878H1165V900M1138 905L1350 898 1405 913 1417 790H1358L1365 750M1210 700L1140 755M1273 898L1277 875 1315 870V898M1222 903V928H1243L1247 903M1190 905V1000L1180 1020V1090L1200 1093 1215 1063 1345 1060V1022L1290 1010 1250 990V955L1360 950 1372 930H1390L1395 912M1160 945H1190M1345 1022L1370 1038V1057L1500 1053M1138 930L1145 1172 1310 1167 1365 1175V1195M1170 1172V1195M1365 1163L1475 1160 1495 1145M1035 1090L1050 1082H1080L1078 1110 1085 1120 1065 1118V1108L1035 1105ZM1135 930L1088 985V1125L1058 1195M985 0L997 30 995 60H1022V90H1065L1078 100 1075 133 1152 143 1155 95 1180 90V0M1095 0L1110 25 1180 22 1305 30 1303 70 1345 88V58L1370 52 1365 0M1290 35L1265 105 1280 122 1268 155M1443 80V180L1435 195 1470 215V250M1470 0L1440 45 1385 80H1443M1435 195L1500 203M1348 270V240L1430 233M1430 150L1440 215 1485 270 1500 470M1440 215H1470M1400 640L1403 680H1430L1440 650 1500 620M1390 740L1410 700 1450 660 1500 640M1365 720L1390 720 1395 740 1430 715 1470 645M1450 590L1455 615 1400 640M1450 560L1500 550"/>
<path transform="translate(860 570) scale(.35714 .33333)" d="M178 70V185L120 187 20 200 0 200M178 70L200 60 205 45 262 48 265 75 330 70 350 70M225 125L230 100H275V233M225 125L215 130 218 155H230V210L220 230 155 225V250L180 262M183 320V345L160 340 150 320M155 262H225L235 210M275 233H310V210L370 205 372 235 385 240M20 210L35 265H60L65 320H165M65 320L60 375H105L110 402M0 375L40 405H60M110 345H165V390L130 400 108 400ZM75 405H110L120 440 105 445 70 430ZM245 320L285 315V265M245 320V375L215 395 220 430 215 470M220 395L150 430 120 450M360 290V338H410V265M390 355H410M385 365V405L365 425V720L200 725M400 360L395 400 410 405 390 425M410 338L450 380 500 330M350 0L355 70 380 240 400 275 360 295M430 70L530 65 533 115H628L615 150 500 320M428 0L430 65M380 80L425 70M350 30V70M570 80V58L650 50V65M595 75L635 85M655 0V225L650 255 660 315 810 300M598 255H650M540 280H608L610 360 570 365 573 388 550 378 540 340 500 320 540 280M700 60L750 58 755 85H705ZM810 0V70L730 125 740 130 705 140V200L733 205V235L755 240 760 248H808M803 80L805 165 815 185 808 240 812 380 818 407H885V385M803 80L640 150M805 165L960 163 1240 157M958 0V160L965 595M1038 160V293M660 315L668 385 988 378 1012 430 1115 432M810 300L835 298 850 305 870 298 1110 295M1112 0V430M1112 103H1222M1112 25H1165M1112 265H1210M1213 430V318H1325M1255 212H1215V320M1115 430H1213V485L1235 520 1240 560 1270 580 1285 625 1320 605V583L1335 585V605H1370M668 385L685 400V425L665 430 655 440M665 315V440M590 365L640 430 690 470V510L735 505V480L700 470M690 500L715 530V548L865 543 860 410M740 503L765 505V545M885 437H955V380H965V435H955M885 437V460L905 462 915 490 935 485V460L960 462M865 462H905M818 545V573L885 572 890 580 918 565 925 555 930 590M892 600H1018V740L1045 772H1100M892 600V625L918 628 905 655V690H938L942 730 915 755M850 690L865 735 885 758 935 765 945 735 975 735 980 780M365 540L465 565 515 570 615 580 715 605M715 550V605L745 618V655L860 690M515 562V515L540 505 538 450 525 440V340M615 585L625 655 630 680 610 695 605 712 768 707V655H745M475 715L490 690 605 687M370 695L445 690 455 710M640 545L655 515 690 500M635 540V580M330 613H365V640H330ZM0 740L20 735 25 678 65 675 68 730 100 740 130 725 165 722 210 752 235 730 250 745 265 735 290 722H340V770L370 772V1045L395 1058 440 1055 450 1045 480 1055 518 1045M200 735L370 720M143 722V805L120 808V830L195 835V985M120 915H195M172 990V970L195 968M110 880L180 1045 235 1100M200 990L250 995V975L290 940 320 950 370 938M0 1055H75V1040L98 1048V1025H122V1050L250 1045V1025L290 1018 302 1030V990M302 1030V1058L322 1060 325 1020 360 985 372 990M125 1065V1145L165 1160M125 1065L180 1055M225 1110V1075H250V1045M322 1060L310 1105 345 1115 375 1145 378 1195M210 1120L285 1100 290 1130H310L325 1145V1170L350 1165 352 1145M0 1165L50 1145 90 1155 130 1165M77 1195V1170L155 1168 165 1140M445 880V765L470 760M445 880L700 875 690 850 672 820V767L720 765V735L780 735 785 765 835 745M720 765V790L805 788 820 820 840 825 850 865 885 870 905 845 940 820M738 710V735M535 880V930H522L520 985H495V1040L520 1042M572 880V955H587V880M600 880L603 1040 625 1045 630 1065M725 875L730 895 775 900V925H795L805 970M785 1000L825 930 870 930 880 915 870 900M785 1000L800 1030V1195M825 930V970M870 930L965 935M460 1190L490 1185 520 1185 530 1150 560 1150 610 1135 605 1165 575 1175 530 1180M610 1140L615 1120 680 1115V1090L578 1095V1065L630 1070V1105M620 1067L680 1065V1110L735 1112V1195M735 1112V1097H835L840 1120 860 1130H883M707 1112V1150H733M883 1195V1015L905 1010 908 950 930 940 1035 937 1045 955 1075 960 1095 950 1090 900 1110 865 1115 835H1100L1090 790 1100 772M883 1040H905M885 1068L925 1065 920 1050 930 1035 965 1020 975 990 1010 988 1020 970 1030 990 1085 980 1090 960 1225 963M885 1098H933L928 1115 885 1110M883 1150H1010V1165L1005 1195 885 1192M1010 1160L1035 1140V1110L1010 1095 1005 1075 965 1070 925 1065M1085 985L1110 1000 1112 1040H1285V1095H1370M1112 1040L1075 1045V1065L1083 1075V1110H1035M1083 1110L1095 1125 1115 1120 1120 1100 1145 1098 1135 1145 1185 1150 1225 1160M1228 690L1238 800 1222 870 1225 1160M970 880L1000 878 1010 895H1033L1035 935M1100 935L1130 937 1140 955M1105 960L1110 940M1075 640M1070 690L1110 695 1150 690 1205 700 1225 717 1370 715M1055 668L1110 660 1200 655M1065 430V690M1018 620H1070M1055 668V620M1132 770V720L1180 718 1185 730H1215V760L1230 770M1132 770H1095M1110 800H1150V825L1188 827M1183 855V830L1190 805 1208 830 1205 855ZM1190 805L1225 850 1285 880V828L1270 825V808L1235 800M1225 880H1270V905L1285 910 1330 905 1340 930 1370 935M995 600V640L1010 650M1115 560V540M1213 485L1175 570 1190 620 1228 690M1335 355H1360M1375 400V470M1400 545L1395 580 1400 600 1418 625V655L1480 668 1490 640 1510 620M1375 700L1400 670 1460 668V845L1535 848 1530 880 1520 915 1470 912 1410 880H1380M1490 850V912M1375 970L1395 990 1450 1000 1530 995 1568 1000M1490 1000V1168L1380 1168M1490 1168H1568M1465 1195L1455 1170"/>
<path transform="translate(1400 420) scale(.33333 .39216)" d="M25 885V915H0M50 865L100 930 75 925 55 940M65 862L85 895 105 915 90 930M85 880L130 858 160 870 190 895M108 1000V1330H55V1395M0 1378H55M0 1098L28 1103 15 1160 0 1150M0 1230L70 1228 80 1238H108M175 998L165 1020 175 1035 215 1055V1085L265 1127 235 1145 215 1150V1273H160V1330H190L215 1352 240 1355 225 1378 375 1375V1238L460 1235M110 1258L160 1262V1273M215 1258L255 1260 290 1240 320 1240V1105L265 1103M28 1103L108 1103M322 1160H375L410 1165 485 1195V1220L460 1235M320 1235L375 1238M428 1238V1375H375M428 1375V1395M215 1390V1395M408 1057V1085L435 1105M510 1068V1108L475 1110 440 1130 460 1160 470 1195H535V1168L583 1165V1152L690 1153M420 1060L430 1072 450 1062 470 1072 500 1062V1075M748 1047V1085L692 1103V1322L790 1325M445 1287L520 1287 495 1270 520 1252 580 1245 590 1255 610 1252 615 1268 640 1265 648 1245 690 1253M460 1235L445 1287 445 1310"/>
</g>
<g class="coast">
<path transform="translate(860 180) scale(.33333)" d="M845 40L870 90 900 130 950 200 1000 245 1035 268 1060 350 1068 430 1085 490 1105 540 1110 610 1122 650 1135 685 1170 695 1155 712 1145 700 1150 750 1165 770 1175 830 1190 870 1200 885 1195 900 1205 930 1225 960H1260M1225 968H1265M1230 950H1255M1225 968L1222 1020 1225 1045 1245 1060V1105L1230 1110 1225 1060M1232 1105L1240 1150 1255 1200"/>
<path transform="translate(860 570) scale(.35714 .33333)" d="M1165 0L1190 60 1230 130 1240 155 1233 170 1240 195 1258 210 1265 230 1285 260 1310 295 1325 290 1330 305 1318 312 1355 330 1360 365 1375 400V470L1400 515 1425 525 1425 540 1440 545 1475 575 1485 575 1515 610 1568 570"/>
<path transform="translate(1400 420) scale(.33333 .39216)" d="M0 903L25 885 60 865 90 860 125 850H150L195 885 165 915 140 945 95 962 135 1000 175 998 290 1040 415 1057 500 1062 515 1070 640 1065 790 1040"/>
</g>
<path class="state" d="M1350 728V968"/>
<!-- route shields -->
<use href="#shield" x="954" y="463" width="23" height="19"/><use href="#shield" x="887.500" y="826" width="23" height="19"/><use href="#shield" x="1333" y="716" width="19" height="18"/>
<rect x="460.500" y="482.500" width="18" height="12" rx="2" fill="#f4f4f4" stroke="#bbb"/>
<path d="M627 967l2-3 3 1 3-1 3 1 3-1 2 3" fill="none" stroke="#ccc" stroke-width="1.500"/>
<g class="rt"><text x="965.500" y="477">290</text><text x="899" y="840.500">355</text><text x="1342.500" y="729.500">90</text></g>
<text class="r38" x="469.500" y="491.500">38</text>
<!-- region names -->
<g class="region"><text x="674" y="604" textLength="43">630/331</text><text x="1206" y="659" textLength="17">773</text><text x="945.500" y="730.500" textLength="101">Chicago-Naperville-</text><text x="945.500" y="744" textLength="73">Elgin, IL-IN-WI</text></g>
<!-- towns -->
<g class="town"><text x="878.500" y="223" textLength="43">Palatine</text><text x="832" y="319.500" textLength="66">Schaumburg</text><text x="620" y="548" textLength="39">Batavia</text><text x="808" y="529.500" textLength="47">Wheaton</text><text x="968" y="264.500" textLength="34">Mount</text><text x="968" y="278" textLength="46">Prospect</text><text x="1014.500" y="309" textLength="59">Des Plaines</text><text x="965" y="338.500" textLength="48">Elk Grove</text><text x="965" y="352" textLength="36">Village</text><text x="1139.500" y="328" textLength="33">Skokie</text><text x="1110" y="504" textLength="46">Oak Park</text><text x="1138" y="553" textLength="32">Cicero</text><text x="581" y="760" textLength="43">Oswego</text><text x="843.500" y="733.500" textLength="63">Bolingbrook</text><text x="1134.500" y="720.500" textLength="49">Oak Lawn</text><text x="1046" y="820" textLength="61">Orland Park</text><text x="1110" y="891.500" textLength="57">Tinley Park</text><text x="1237.500" y="846" textLength="37">Harvey</text><text x="1353" y="837" textLength="53">Hammond</text></g>
<g class="city"><text x="649.500" y="310" textLength="43">Elgin</text><text x="1194.500" y="301" textLength="79">Evanston</text><text x="618" y="659" textLength="59">Aurora</text><text x="773" y="640" textLength="89">Naperville</text><text x="832" y="945.500" textLength="48">Joliet</text><text x="1524.500" y="852" textLength="40">Gary</text></g>
<g class="pt"><circle cx="649.500" cy="320.500" r="2"/><circle cx="878.500" cy="229.500" r="2"/><circle cx="832.500" cy="325.500" r="2"/><circle cx="620.500" cy="554.500" r="2"/><circle cx="807.500" cy="535.500" r="2"/><circle cx="968.500" cy="284.500" r="2"/><circle cx="1014.500" cy="315.500" r="2"/><circle cx="965.500" cy="358.500" r="2"/><circle cx="1194.500" cy="311.500" r="2"/><circle cx="1139.500" cy="334.500" r="2"/><circle cx="1109.500" cy="510.500" r="2"/><circle cx="1137.500" cy="559.500" r="2"/><circle cx="618.500" cy="669.500" r="2"/><circle cx="772.500" cy="650.500" r="2"/><circle cx="580.500" cy="766.500" r="2"/><circle cx="843.500" cy="740.500" r="2"/><circle cx="831.500" cy="955.500" r="2"/><circle cx="1134.500" cy="727.500" r="2"/><circle cx="1045.500" cy="826.500" r="2"/><circle cx="1109.500" cy="897.500" r="2"/><circle cx="1237.500" cy="852.500" r="2"/><circle cx="1352.500" cy="843.500" r="2"/><circle cx="1524.500" cy="862.500" r="2"/></g>
<!-- crime marks: north-west corridor -->
<g class="marks-pt" transform="translate(860 180) scale(.33333)">
<circle cx="456" cy="629" fill="#bab0ac"/><circle cx="457" cy="692" fill="#e15759"/><circle cx="475" cy="728" fill="#f1ce63"/><circle cx="497" cy="769" fill="#ff9d9a"/><circle cx="489" cy="756" fill="#499894"/><circle cx="509" cy="750" fill="#f28e2b"/><circle cx="531" cy="774" fill="#79706e"/><circle cx="537" cy="779" fill="#59a14f"/><circle cx="515" cy="796" fill="#8cd17d"/><circle cx="563" cy="841" fill="#b6992d"/><circle cx="577" cy="887" fill="#ffbe7d"/><circle cx="570" cy="871" fill="#a0cbe8"/><circle cx="602" cy="933" fill="#d37295"/><circle cx="615" cy="960" fill="#86bcb6"/><circle cx="762" cy="792" fill="#ffbe7d"/><circle cx="796" cy="618" fill="#499894"/><circle cx="827" cy="956" fill="#d4a6c8"/><circle cx="968" cy="1114" fill="#f1ce63"/>
</g>
<!-- crime marks: downtown and south side -->
<g class="marks-pt" transform="translate(1140 370) scale(.33333)">
<circle cx="240" cy="151" fill="#bab0ac"/><circle cx="230" cy="250" fill="#ff9d9a"/><circle cx="256" cy="263" fill="#b6992d"/><circle cx="119" cy="361" fill="#f28e2b"/><circle cx="120" cy="373" fill="#86bcb6"/><circle cx="303" cy="352" fill="#d7b5a6"/><circle cx="335" cy="359" fill="#d4a6c8"/><circle cx="271" cy="386" fill="#4e79a7"/><circle cx="271" cy="373" fill="#ffbe7d"/><circle cx="362" cy="395" fill="#fabfd2"/><circle cx="213" cy="396" fill="#59a14f"/><circle cx="387" cy="446" fill="#8cd17d"/><circle cx="247" cy="413" fill="#4e79a7"/><circle cx="253" cy="422" fill="#ff9d9a"/><circle cx="204" cy="431" fill="#ffbe7d"/><circle cx="213" cy="434" fill="#e15759"/><circle cx="279" cy="434" fill="#4e79a7"/><circle cx="238" cy="448" fill="#b07aa1"/><circle cx="251" cy="440" fill="#b6992d"/><circle cx="239" cy="436" fill="#d7b5a6"/><circle cx="264" cy="460" fill="#b6992d"/><circle cx="248" cy="452" fill="#f28e2b"/><circle cx="257" cy="453" fill="#4e79a7"/><circle cx="305" cy="459" fill="#ff9d9a"/><circle cx="278" cy="470" fill="#ffbe7d"/><circle cx="304" cy="498" fill="#d7b5a6"/><circle cx="176" cy="492" fill="#8cd17d"/><circle cx="200" cy="478" fill="#86bcb6"/><circle cx="272" cy="488" fill="#d37295"/><circle cx="235" cy="488" fill="#59a14f"/><circle cx="222" cy="487" fill="#9d7660"/><circle cx="246" cy="487" fill="#a0cbe8"/><circle cx="258" cy="496" fill="#86bcb6"/><circle cx="270" cy="510" fill="#86bcb6"/><circle cx="232" cy="512" fill="#59a14f"/><circle cx="238" cy="503" fill="#ff9d9a"/><circle cx="260" cy="515" fill="#f1ce63"/><circle cx="245" cy="510" fill="#f28e2b"/><circle cx="197" cy="525" fill="#f1ce63"/><circle cx="220" cy="523" fill="#b6992d"/><circle cx="175" cy="526" fill="#79706e"/><circle cx="175" cy="533" fill="#79706e"/><circle cx="205" cy="535" fill="#499894"/><circle cx="189" cy="537" fill="#9d7660"/><circle cx="260" cy="532" fill="#f1ce63"/><circle cx="243" cy="537" fill="#d7b5a6"/><circle cx="228" cy="541" fill="#ff9d9a"/><circle cx="281" cy="536" fill="#4e79a7"/><circle cx="295" cy="543" fill="#79706e"/><circle cx="127" cy="545" fill="#f1ce63"/><circle cx="218" cy="562" fill="#4e79a7"/><circle cx="207" cy="555" fill="#59a14f"/><circle cx="229" cy="548" fill="#e15759"/><circle cx="170" cy="556" fill="#a0cbe8"/><circle cx="190" cy="567" fill="#fabfd2"/><circle cx="167" cy="577" fill="#9d7660"/><circle cx="241" cy="562" fill="#ffbe7d"/><circle cx="208" cy="574" fill="#499894"/><circle cx="225" cy="577" fill="#9d7660"/><circle cx="256" cy="567" fill="#b07aa1"/><circle cx="239" cy="576" fill="#d4a6c8"/><circle cx="255" cy="586" fill="#a0cbe8"/><circle cx="237" cy="593" fill="#b07aa1"/><circle cx="104" cy="607" fill="#8cd17d"/><circle cx="215" cy="600" fill="#79706e"/><circle cx="197" cy="618" fill="#f28e2b"/><circle cx="188" cy="611" fill="#bab0ac"/><circle cx="222" cy="612" fill="#d37295"/><circle cx="210" cy="619" fill="#79706e"/><circle cx="243" cy="628" fill="#f28e2b"/><circle cx="258" cy="617" fill="#8cd17d"/><circle cx="249" cy="616" fill="#59a14f"/><circle cx="225" cy="640" fill="#bab0ac"/><circle cx="243" cy="643" fill="#b6992d"/><circle cx="202" cy="655" fill="#f28e2b"/><circle cx="192" cy="652" fill="#fabfd2"/><circle cx="211" cy="661" fill="#a0cbe8"/><circle cx="227" cy="674" fill="#b07aa1"/><circle cx="237" cy="689" fill="#ffbe7d"/><circle cx="220" cy="699" fill="#4e79a7"/><circle cx="320" cy="571" fill="#e15759"/><circle cx="343" cy="600" fill="#e15759"/><circle cx="302" cy="686" fill="#fabfd2"/><circle cx="298" cy="673" fill="#f1ce63"/><circle cx="312" cy="698" fill="#bab0ac"/><circle cx="322" cy="736" fill="#e15759"/><circle cx="389" cy="750" fill="#f1ce63"/><circle cx="345" cy="788" fill="#d37295"/><circle cx="270" cy="838" fill="#499894"/><circle cx="318" cy="838" fill="#fabfd2"/><circle cx="398" cy="962" fill="#d7b5a6"/><circle cx="351" cy="1171" fill="#d37295"/>
</g>
<rect x="384" y="951" width="177" height="17" fill="#fff" fill-opacity=".8" stroke="none"/>
<text class="attr" x="387.500" y="963.500" textLength="170">© 2024 Mapbox © OpenStreetMap</text>
<path d="M1430.500 953v9.500h223.500" fill="none" stroke="#000"/>
<text class="km" x="1617" y="958" textLength="36">20 km</text>
</svg>
        </div>
      </div>
      <div class="lists">
        <div class="lc c1"><h4>Location Description</h4><div class="lb"><ul class="chk">
          <li class="no"><i></i>(All)</li><li class="no"><i></i>Null</li><li><i><svg><use href="#check"/></svg></i>ABANDONED BUILDING</li><li><i><svg><use href="#check"/></svg></i>AIRCRAFT</li><li><i><svg><use href="#check"/></svg></i>AIRPORT BUILDING NON-TERMI...</li><li><i><svg><use href="#check"/></svg></i>AIRPORT BUILDING NON-TERMI...</li><li><i><svg><use href="#check"/></svg></i>AIRPORT EXTERIOR - NON-SEC...</li><li><i><svg><use href="#check"/></svg></i>AIRPORT EXTERIOR - SECURE A...</li><li><i><svg><use href="#check"/></svg></i>AIRPORT PARKING LOT</li><li><i><svg><use href="#check"/></svg></i>AIRPORT TERMINAL LOWER LE...</li><li><i><svg><use href="#check"/></svg></i>AIRPORT TERMINAL LOWER LE...</li><li><i><svg><use href="#check"/></svg></i>AIRPORT TERMINAL MEZZANIN...</li><li><i><svg><use href="#check"/></svg></i>AIRPORT TERMINAL UPPER LEV...</li></ul><span class="sb"></span></div></div>
        <div class="lc c2"><h4>Block</h4><div class="lb"><ul class="chk">
          <li><i><svg><use href="#check"/></svg></i>(All)</li><li><i><svg><use href="#check"/></svg></i>001XX E 13TH ST</li><li><i><svg><use href="#check"/></svg></i>001XX E 14TH ST</li><li><i><svg><use href="#check"/></svg></i>001XX E 16TH ST</li><li><i><svg><use href="#check"/></svg></i>001XX E 18TH ST</li><li><i><svg><use href="#check"/></svg></i>001XX E 21ST ST</li><li><i><svg><use href="#check"/></svg></i>001XX E 23RD ST</li><li><i><svg><use href="#check"/></svg></i>001XX E 24TH ST</li><li><i><svg><use href="#check"/></svg></i>001XX E 25TH ST</li><li><i><svg><use href="#check"/></svg></i>001XX E 26TH ST</li><li><i><svg><use href="#check"/></svg></i>001XX E 28TH PL</li><li><i><svg><use href="#check"/></svg></i>001XX E 31ST ST</li><li><i><svg><use href="#check"/></svg></i>001XX E 32ND ST</li></ul><span class="sb"></span></div></div>
        <div class="lc c3"><h4>Location Description</h4><div class="lb"><ul class="leg">
          <li><i class="k1"></i>ABANDONED BUILDING</li><li><i class="k2"></i>AIRCRAFT</li><li><i class="k3"></i>AIRPORT BUILDING NON-TERMI..</li><li><i class="k4"></i>AIRPORT BUILDING NON-TERMI..</li><li><i class="k5"></i>AIRPORT EXTERIOR - NON-SECU..</li><li><i class="k6"></i>AIRPORT EXTERIOR - SECURE AR..</li><li><i class="k7"></i>AIRPORT PARKING LOT</li><li><i class="k8"></i>AIRPORT TERMINAL LOWER LEV..</li><li><i class="k9"></i>AIRPORT TERMINAL LOWER LEV..</li><li><i class="k10"></i>AIRPORT TERMINAL MEZZANINE..</li><li><i class="k11"></i>AIRPORT TERMINAL UPPER LEVE..</li><li><i class="k12"></i>AIRPORT TERMINAL UPPER LEVE..</li></ul><span class="sb"></span></div></div>
      </div>
    </div>
  </section>
</main>

<div class="sheets">
  <span class="s0"><svg width="9" height="12" viewBox="0 0 9 12"><ellipse cx="4.500" cy="2.500" rx="3.700" ry="1.700"/><path d="M.8 2.500v7c0 2.300 7.400 2.300 7.400 0v-7"/></svg>Data Source</span>
  <span class="s1">Crime Locations</span>
  <span class="s2">Most Common Criminal Incidents</span>
  <span class="s3">Live Crime Feed</span>
  <span class="s4"><svg class="gr" width="12" height="12"><use href="#grid"/></svg>Introductory Dashboard</span>
  <span class="s5">Distribution Count of Crime Inci...</span>
  <span class="s6">Percentage of Incident Reportin...</span>
  <span class="s7"><svg class="gr" width="12" height="12"><use href="#grid"/></svg>Time Period Analysis Dashbo...</span>
  <span class="s8">Change in crime rate</span>
  <span class="s9">Comparing changes in the incid...</span>
  <span class="s10"><svg class="gr" width="12" height="12"><use href="#grid"/></svg>Trend Analysis Dashboard</span>
  <span class="s11"><svg width="15" height="15" viewBox="0 0 15 15"><path d="M8 11H1V1h11v6M3.500 9V7M6.500 9V4M9 7V5.500"/><path d="M8 11h7M11.500 7.500v7" stroke-width="2"/></svg></span>
  <span class="s11"><svg width="15" height="15" viewBox="0 0 15 15"><path d="M7 11H1V1h11v6M1 6h11M6.500 1v10"/><path d="M8 11h7M11.500 7.500v7" stroke-width="2"/></svg></span>
  <span class="s11"><svg width="15" height="15" viewBox="0 0 15 15"><path d="M6.500 12L1 10V1l5.500 2L12 1v6M6.500 3v9"/><path d="M8 11h7M11.500 7.500v7" stroke-width="2"/></svg></span>
</div>
<footer class="status">
  <span class="a1">133 marks</span><span class="a2">1 row by 1 column</span><span class="a3">SUM of AVG(Longitude): -11,662.5131</span>
  <span class="user"><svg width="11" height="14" viewBox="0 0 11 14"><circle cx="5.500" cy="4" r="3"/><path d="M1 13v-2.500c0-2 1.500-2.500 2.500-2.500h4c1 0 2.500.5 2.500 2.500V13z"/></svg>Ronit Majum...<em></em></span>
  <span class="e1"></span><span class="e1"></span><span class="e2"></span>
  <span class="nav"><svg width="7" height="8" viewBox="0 0 7 8"><path d="M0 0h1.500v8H0zM7 0v8L2 4z"/></svg><svg width="5" height="8" viewBox="0 0 5 8"><path d="M5 0v8L0 4z"/></svg><svg width="5" height="8" viewBox="0 0 5 8"><path d="M0 0v8l5-4z"/></svg><svg width="7" height="8" viewBox="0 0 7 8"><path d="M5.500 0H7v8H5.500zM0 0v8l5-4z"/></svg></span>
  <span class="views"><svg width="11" height="11" viewBox="0 0 11 11"><path d="M0 0h3v3H0zM4 0h3v3H4zM8 0h3v3H8zM0 4h3v3H0zM4 4h3v3H4zM8 4h3v3H8zM0 8h3v3H0zM4 8h3v3H4zM8 8h3v3H8z" fill="#b5b5b5"/></svg><svg width="11" height="11" viewBox="0 0 11 11"><path d="M0 0h11v7H0zM0 8h3v3H0zM4 8h3v3H4zM8 8h3v3H8z" fill="#b5b5b5"/></svg><svg width="11" height="11" viewBox="0 0 11 11"><path d="M0 0h11v11H0z" fill="#555"/></svg></span>
</footer>
<div class="watermark"><b>Activate Windows</b><span>Go to Settings to activate Windows.</span></div>
</body>
</html>
```
FILE: styles.css
```css
* { box-sizing: border-box; }
body { margin: 0; width: 1919px; height: 1035px; overflow: hidden; display: flex; flex-direction: column; background: #f4f4f4; font: 12px/1 Inter, "Open Sans", sans-serif; color: #333; position: relative; }
ul, h1, h3, h4 { margin: 0; padding: 0; list-style: none; font-weight: 400; }
i, em { font-style: normal; flex: none; }
svg { fill: none; stroke: #666; display: block; flex: none; }
.defs { position: absolute; }
span, b, li, div { white-space: nowrap; }

.titlebar { height: 23px; flex: none; background: linear-gradient(90deg, #e9f5f8, #ebf3fb 35%, #ebf3fb 75%, #e9f5f8); display: flex; align-items: center; font-family: "Noto Sans", sans-serif; color: #111; }
.appicon { width: 16px; height: 16px; margin-left: 2px; background: #f5f5f5; border: 1px solid #ccc; }
.apptitle { margin-left: 6px; font-size: 12px; letter-spacing: -.31px; padding-top: 1px; }
.winbtns { margin-left: auto; display: flex; gap: 33px; margin-right: 19px; }
.winbtns svg { width: 12px; height: 12px; stroke: #111; margin-top: -2px; }

.menubar { height: 20px; flex: none; background: #fff; display: grid; grid-template-columns: 8px 33px 40px 72px 73px 43px 59px 41px 53px 49px 60px 60px; align-items: center; font: 12px/1 "Noto Sans", sans-serif; color: #000; letter-spacing: -.35px; padding-top: 2px; }
.m1 { grid-column: 2; }
.menubar u { text-underline-offset: 2px; }

.toolbar { height: 41px; flex: none; display: flex; border-top: 1px solid #ececec; padding: 4px 0 2px; }
.tg { display: flex; align-items: center; border-right: 1px solid #cfcfcf; height: 35px; padding-bottom: 3px; }
.tg span { display: flex; justify-content: center; align-items: center; flex: none; }
.g1 { width: 48px; } .g2 { width: 182px; padding-left: 6px; } .g3 { width: 126px; padding-left: 4px; } .g4 { width: 110px; padding-left: 5px; } .g5 { width: 278px; padding-left: 8px; } .g6 { width: 86px; padding-left: 8px; }
.w46 { width: 46px; } .w32 { width: 32px; } .w33 { width: 33px; } .w28 { width: 28px; } .w12 { width: 12px; } .w9 { width: 9px; } .w30 { width: 30px; } .w10 { width: 10px; } .w7 { width: 7px; } .w8 { width: 8px; } .w36 { width: 36px; }
.off svg { stroke: #b9b9b9; }
.on { background: #e4e4e4; height: 30px; }
.on svg { stroke: #333; }
.gap { margin-left: 4px; }
.car::after { content: ""; border: 2.5px solid transparent; border-top: 4px solid #555; border-bottom: 0; }
.car.off::after { border-top-color: #b4b4b4; }
.combo { width: 104px; height: 23px; border: 1px solid #cfcfcf; margin-left: 9px; border-radius: 2px; }
.tg .combo { justify-content: flex-end; padding-right: 5px; }
.combo i { border: 4px solid transparent; border-top: 5px solid #ccc; border-bottom: 0; }
.showme { margin-left: auto; margin-right: 28px; display: flex; align-items: center; gap: 6px; font-size: 13px; letter-spacing: -.35px; padding-bottom: 4px; }
.showme svg { stroke: none; }

.work { display: flex; height: 897px; flex: none; }
.data { width: 210px; flex: none; background: #fff; border-right: 1px solid #cfcfcf; color: #333; }
.tabs { height: 27px; display: flex; border-top: 1px solid #d4d4d4; font-size: 13px; }
.tabs b { width: 78px; padding: 6px 0 0 18px; color: #000; font-size: 13px; font-weight: 600; border-right: 1px solid #d4d4d4; }
.an { flex: 1; background: #fafafa; border-bottom: 1px solid #d4d4d4; padding: 6px 7px 0 12px; display: flex; justify-content: space-between; letter-spacing: -.1px; }
.an svg { margin-top: 1px; }
.source { height: 30px; border-bottom: 1px solid #e1e1e1; display: flex; align-items: center; gap: 6px; padding: 0 0 0 20px; color: #555; font-size: 12.300px; letter-spacing: -.05px; }
.search { display: flex; align-items: center; padding: 7px 0 0 8px; height: 31px; }
.box { width: 130px; height: 23px; border: 1px solid #c4c4c4; border-radius: 2px; padding: 0 7px 0 6px; display: flex; justify-content: space-between; align-items: center; color: #999; letter-spacing: -.1px; }
.fun { margin-left: 4px; }
.lst { margin-left: 5px; padding-left: 6px; border-left: 1px solid #d4d4d4; width: 19px; height: 20px; }
.tri { border: 4px solid transparent; border-top: 5px solid #555; border-bottom: 0; margin-left: 8px; }
.data h3 { font-size: 13px; font-weight: 600; color: #000; padding: 10px 0 0 18px; height: 30px; }
.fields { padding: 0; letter-spacing: -.15px; }
.dim { border-bottom: 1px solid #dcdcdc; margin: 0 6px 0 15px; height: 442px; }
.dim li { margin-left: -15px; }
.mea { padding-top: 1px; }
.fields li { height: 21px; display: flex; align-items: center; font-size: 12px; padding-bottom: 2px; }
.fields i { width: 38px; margin-right: 9px; display: flex; justify-content: flex-end; align-items: center; color: #37809d; font-size: 10px; }
.fields i b { font-weight: 600; font-size: 9.300px; }
.fields i svg { width: 12px; height: 12px; stroke: #37809d; margin-right: 3px; }
.mea i, .g i { color: #35a47e; }
.mea i svg, .fields .g svg { stroke: #35a47e; }
.it { font-style: italic; }
.fields .sel { margin-right: -3px; }
.fields .sel i { margin-right: 2px; }
.sel span { background: #9cc5d5; border: 1px solid #7fb2c6; border-radius: 10px; height: 20px; width: 167px; padding: 3px 0 0 6px; position: relative; color: #1e2f38; letter-spacing: -.05px; flex: none; }
.sel span::after { content: ""; position: absolute; right: 6px; top: 7px; border: 4px solid transparent; border-top: 4px solid #fff; border-bottom: 0; }

.cards { width: 154px; margin-left: 6px; flex: none; display: flex; flex-direction: column; gap: 6px; }
.card { border: 1px solid #d4d4d4; background: #fafafa; }
h4 { font-size: 12.300px; color: #555; padding: 9px 0 0 6px; letter-spacing: -.1px; }
.pages { height: 62px; } .filters { height: 101px; } .marks { height: 218px; }
.pill { display: block; background: #4996b2; color: #fff; border-radius: 10px; height: 20px; line-height: 20px; width: 144px; padding-left: 10px; font-weight: 500; font-size: 12px; }
.filters .pill { margin: 0 0 3px 4px; }
.filters h4 { height: 32px; } .marks h4 { height: 35px; }
.msel { margin: 0 6px; height: 21px; border: 1px solid #cfcfcf; display: flex; align-items: center; padding-left: 11px; background: #fff; border-radius: 2px; color: #555; width: 140px; }
.msel svg { fill: #555; stroke: none; }
.msel span { margin-left: 6px; flex: 1; letter-spacing: -.2px; }
.msel em { width: 18px; height: 100%; border-left: 1px solid #dcdcdc; display: grid; place-items: center; }
.msel em::after { content: ""; border: 3.500px solid transparent; border-top: 4px solid #444; border-bottom: 0; }
.mgrid { display: grid; grid-template-columns: 43px 42px 43px; gap: 6px; margin: 6px; }
.mgrid div { height: 42px; border: 1px solid #d4d4d4; display: flex; flex-direction: column; align-items: center; padding: 6px 1px 0 0; gap: 7px; font-size: 11.500px; letter-spacing: -.1px; }
.mpill use, .mgrid div:first-child use { stroke: none; }
.mpill { display: flex; align-items: center; gap: 4px; margin: 9px 0 0 13px; }
.mpill .pill { width: 111px; }

.right { margin-left: 6px; width: 1538px; display: flex; flex-direction: column; gap: 6px; }
.shelf { height: 28px; border: 1px solid #d4d4d4; background: #fafafa; display: flex; align-items: center; flex: none; }
.sl { width: 125px; height: 100%; border-right: 1px solid #d4d4d4; display: flex; align-items: center; gap: 7px; padding-left: 6px; color: #555; font-size: 12.300px; letter-spacing: -.1px; }
.sl svg { stroke-width: 2; }
.gpill { margin-left: 2px; width: 148px; height: 20px; line-height: 20px; border-radius: 10px; background: #00b180; color: #fff; font-weight: 500; padding-left: 11px; }
.vizrow { display: flex; gap: 6px; height: 823px; }
.viz { width: 1294px; flex: none; border: 1px solid #d4d4d4; background: #fff; padding: 0 5px; }
.viz h1 { height: 39px; padding: 11px 0 0 5px; font-size: 19.500px; line-height: 22px; font-weight: 600; letter-spacing: .15px; color: #f00; text-decoration: underline; text-decoration-thickness: 1px; text-underline-offset: 2px; }
.mapbox { width: 1282px; height: 777px; border: 1px solid #e0e0e0; }
.map path { vector-effect: non-scaling-stroke; }
.minor path { stroke: #e0e0e0; stroke-width: 1; }
.mid path { stroke: #dadada; stroke-width: 1.600; }
.major path { stroke: #d4d4d4; stroke-width: 2.300; stroke-linejoin: round; }
.bound path { stroke: #a0b5c1; stroke-width: 1.100; }
.coast path { stroke: #9fb6c3; stroke-width: 1.400; }
.map .state { stroke: #777; stroke-width: 1.500; stroke-dasharray: 9 1.500; }
.map text { stroke: none; font-family: "Noto Sans", sans-serif; text-anchor: middle; }
.map .town text, .map .city text { paint-order: stroke; stroke: #fff; stroke-opacity: .75; stroke-width: 2px; }
.town text { font-size: 11.800px; fill: #858585; }
.city text { font-size: 18.800px; fill: #7c7c7c; }
.map .region text { font-size: 11.800px; fill: #b3bfc7; paint-order: stroke; stroke: #e9edf0; stroke-width: 2px; font-weight: 500; }
.rt text { font-size: 8.500px; fill: #fff; font-weight: 700; }
.map .r38 { font-size: 8.500px; fill: #999; }
.pt circle { fill: #fff; stroke: #888; stroke-width: 1; }
.marks-pt circle { r: 10.800px; stroke: #000; stroke-width: 3.600px; }
.map .attr { font: 11.500px Roboto, sans-serif; fill: #444; text-anchor: start; }
.map .km { font-size: 12px; fill: #333; text-anchor: start; }

.lists { width: 238px; display: flex; flex-direction: column; gap: 6px; }
.lc { border: 1px solid #d4d4d4; background: #fafafa; overflow: hidden; }
.c1 { height: 270px; } .c2 { height: 271px; } .c3 { flex: 1; }
.lc h4 { height: 29px; }
.lb { background: #fff; display: flex; height: 100%; }
.lb ul { width: 220px; flex: none; }
.chk li { height: 19px; display: flex; align-items: center; padding-left: 6px; color: #444; letter-spacing: -.2px; }
.chk { padding-top: 3px; }
.chk i { width: 15px; height: 15px; border: 1px solid #555; border-radius: 1px; margin-right: 6px; background: #fff; }
.chk svg { width: 15px; height: 15px; margin: -1px; stroke: #444; stroke-width: 1.800; }
.chk .no i { border-color: #c8c8c8; }
.sb { width: 16px; background: #efefef; margin-top: 3px; display: block; }
.sb::after { content: ""; display: block; width: 2px; height: 18px; background: #8a8a8a; margin: 17px 0 0 7px; }
.c3 .sb { margin-top: 0; }
.c3 ul { width: 218px; }
.leg { padding-top: 1px; }
.leg li { height: 20px; display: flex; align-items: center; padding-left: 4px; color: #444; letter-spacing: -.27px; }
.leg i { width: 13px; height: 13px; border: 1px solid #000; margin-right: 5px; }
.k1 { background: #4e79a7; } .k2 { background: #a0cbe8; } .k3 { background: #f28e2b; } .k4 { background: #ffbe7d; } .k5 { background: #59a14f; } .k6 { background: #8cd17d; } .k7 { background: #b6992d; } .k8 { background: #f1ce63; } .k9 { background: #499894; } .k10 { background: #86bcb6; } .k11 { background: #e15759; } .k12 { background: #ff9d9a; }

.sheets { height: 31px; flex: none; display: flex; border-top: 1px solid #c8c8c8; border-bottom: 1px solid #cfcfcf; background: #e6e6e6; color: #666; font-size: 12px; letter-spacing: -.1px; }
.sheets span { border-right: 1px solid #c8c8c8; display: flex; align-items: center; padding: 1px 0 0 5px; flex: none; overflow: hidden; }
.sheets .s0 { width: 131px; padding-left: 9px; gap: 6px; }
.sheets .s1 { width: 108px; background: #fafafa; font-weight: 600; font-size: 12.300px; letter-spacing: -.05px; color: #555; padding: 0 0 1px 6px; }
.s2 { width: 200px; } .sheets .s3 { width: 108px; padding-left: 8px; } .sheets .s4 { width: 169px; padding-left: 7px; } .s5 { width: 200px; } .s6 { width: 200px; } .sheets .s7 { width: 200px; padding-left: 7px; } .sheets .s8 { width: 132px; } .s9 { width: 200px; } .sheets .s10 { width: 176px; padding-left: 7px; }
.sheets .s11 { width: 32px; padding: 0; justify-content: center; }
.sheets .s11:last-child { border: 0; }
.gr { margin-right: 5px; }
.status { height: 24px; flex: none; display: flex; background: #eaeaea; border-bottom: 3px solid #c3dfe8; color: #222; font-size: 11.500px; align-items: center; box-shadow: inset 0 -1px #a9bcc4; }
.a1 { margin-left: 4px; width: 72px; } .a2 { width: 110px; }
.a1, .a2, .a3 { padding-top: 1px; letter-spacing: -.05px; }
.user { margin-left: auto; width: 127px; display: flex; align-items: center; gap: 8px; padding-left: 6px; letter-spacing: -.1px; }
.user, .e1, .e2, .nav, .views { border-left: 1px solid #cfcfcf; height: 100%; flex: none; }
.user em { border: 4px solid transparent; border-top: 4px solid #000; border-bottom: 0; margin-left: 5px; }
.e1 { width: 27px; } .e2 { width: 47px; }
.nav { width: 71px; display: flex; align-items: center; justify-content: space-between; padding: 0 8px; }
.nav svg, .views svg { fill: #444; stroke: none; }
.views { width: 67px; display: flex; align-items: center; justify-content: space-between; padding: 0 5px 0 8px; }
.watermark { position: absolute; left: 1599px; top: 938px; display: flex; flex-direction: column; font-family: "Open Sans", sans-serif; color: rgba(150,150,150,.62); }
.watermark b { font-weight: 400; font-size: 18.900px; line-height: 24px; }
.watermark span { font-size: 14.100px; line-height: 20px; }
```
